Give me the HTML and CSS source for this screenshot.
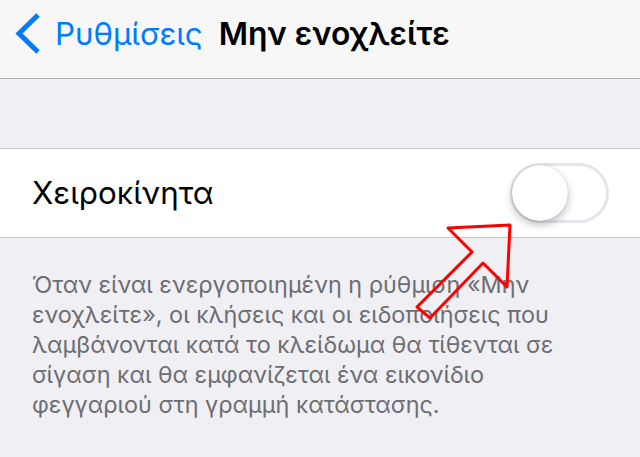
FILE: index.html
```html
<!DOCTYPE html>
<html lang="el">
<head>
    <meta charset="UTF-8">
    <meta name="viewport" content="width=device-width, initial-scale=1.0">
    <title>Μην ενοχλείτε</title>
    <link rel="stylesheet" href="styles.css">
</head>
<body>
    <header class="navbar">
        <a class="back" href="#">
            <svg class="chevron" width="28" height="44" viewBox="0 0 28 44">
                <polyline points="23,2 4,20.5 23,39" fill="none" stroke="currentColor" stroke-width="5"/>
            </svg>
            <span>Ρυθμίσεις</span>
        </a>
        <h1>Μην ενοχλείτε</h1>
    </header>

    <div class="spacer"></div>

    <section class="group">
        <div class="row">
            <span class="label">Χειροκίνητα</span>
            <div class="switch">
                <div class="knob"></div>
            </div>
        </div>
    </section>

    <p class="footnote">Όταν είναι ενεργοποιημένη η ρύθμιση «Μην ενοχλείτε», οι κλήσεις και οι ειδοποιήσεις που λαμβάνονται κατά το κλείδωμα θα τίθενται σε σίγαση και θα εμφανίζεται ένα εικονίδιο φεγγαριού στη γραμμή κατάστασης.</p>

    <!-- annotation arrow drawn over the screenshot -->
    <svg class="arrow" width="640" height="457" viewBox="0 0 640 457">
        <polygon points="510,225 448,228 472,252 417,307 430,318 483,263 507,287" fill="none" stroke="#ff0000" stroke-width="3" stroke-linejoin="round"/>
    </svg>
</body>
</html>
```

FILE: styles.css
```css
* {
    margin: 0;
    padding: 0;
    box-sizing: border-box;
}

body {
    background: #efeff4;
    font-family: Inter, "Liberation Sans", sans-serif;
    width: 640px;
    height: 457px;
    overflow: hidden;
    position: relative;
}

.navbar {
    height: 79px;
    background: #f7f7f8;
    border-bottom: 1px solid #b2b2b2;
    display: flex;
    align-items: flex-start;
    padding: 13px 0 0 15px;
}

.back {
    display: flex;
    align-items: flex-start;
    color: #007aff;
    text-decoration: none;
    font-size: 31.3px;
}

.back span {
    margin-left: 12px;
    margin-top: 2px;
}

.chevron {
    display: block;
}

.navbar h1 {
    font-size: 31.8px;
    font-weight: 600;
    color: #000;
    margin-left: 16px;
    margin-top: 1px;
}

.spacer {
    height: 69px;
}

.group {
    background: #fff;
    border-top: 1px solid #c8c7cc;
    border-bottom: 1px solid #c8c7cc;
}

.row {
    height: 88px;
    display: flex;
    align-items: center;
    justify-content: space-between;
    padding: 0 31px 0 32px;
}

.label {
    font-size: 31.3px;
    color: #000;
}

.switch {
    width: 99px;
    height: 60px;
    border-radius: 30px;
    border: 3px solid #e5e5ea;
    background: #fff;
    position: relative;
}

.knob {
    position: absolute;
    top: -1px;
    left: -1px;
    width: 56px;
    height: 56px;
    border-radius: 50%;
    background: #fff;
    box-shadow: 0 4px 8px rgba(0, 0, 0, 0.25), 0 0 1px rgba(0, 0, 0, 0.3);
}

.footnote {
    padding: 32px 40px 0 32px;
    font-size: 23.4px;
    line-height: 30px;
    color: #6d6d72;
}

.arrow {
    position: absolute;
    top: 0;
    left: 0;
    pointer-events: none;
}
```
